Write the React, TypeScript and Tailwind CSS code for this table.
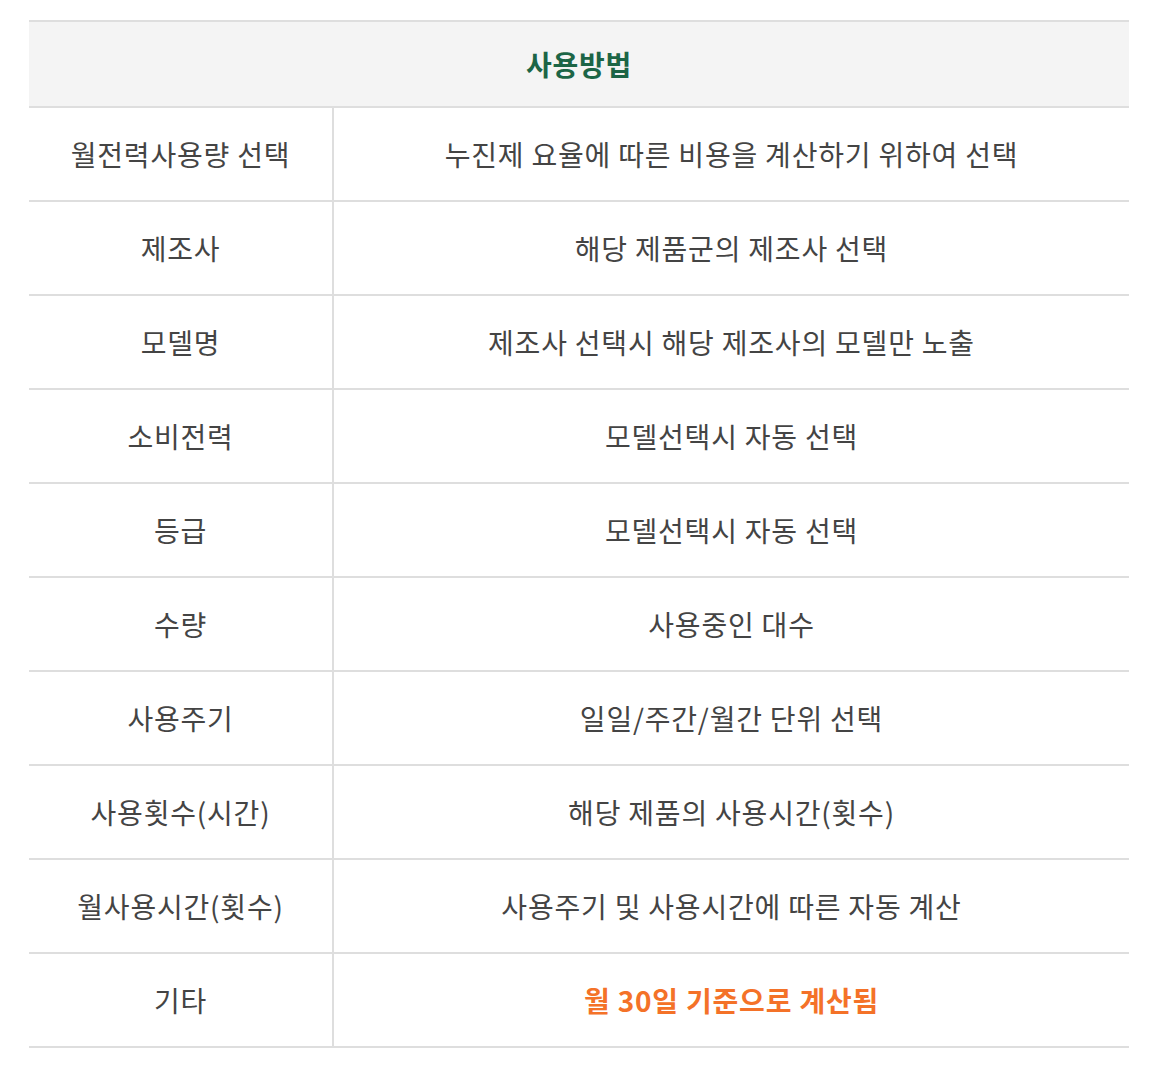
const ROWS = [
  { label: "월전력사용량 선택", desc: "누진제 요율에 따른 비용을 계산하기 위하여 선택" },
  { label: "제조사", desc: "해당 제품군의 제조사 선택" },
  { label: "모델명", desc: "제조사 선택시 해당 제조사의 모델만 노출" },
  { label: "소비전력", desc: "모델선택시 자동 선택" },
  { label: "등급", desc: "모델선택시 자동 선택" },
  { label: "수량", desc: "사용중인 대수" },
  { label: "사용주기", desc: "일일/주간/월간 단위 선택" },
  { label: "사용횟수(시간)", desc: "해당 제품의 사용시간(횟수)" },
  { label: "월사용시간(횟수)", desc: "사용주기 및 사용시간에 따른 자동 계산" },
];

export default function App() {
  return (
    <div
      className="bg-white pt-[20px] px-[29px] min-h-[1066px]"
      style={{ fontFamily: '"Noto Sans CJK KR", "Noto Sans", sans-serif' }}
    >
      <div className="w-[1100px] border-t-2 border-[#dedede]">
        {/* Header */}
        <div className="h-[86px] bg-[#f4f4f4] border-b-2 border-[#dedede] flex items-center justify-center">
          <span className="text-[28px] font-bold text-[#1c6546] tracking-[0.8px]">사용방법</span>
        </div>

        {ROWS.map((row) => (
          <div key={row.label} className="flex h-[94px] border-b-2 border-[#dedede]">
            <div className="w-[303px] flex items-center justify-center text-[28px] text-[#444] tracking-[0.8px]">
              {row.label}
            </div>
            <div className="flex-1 border-l-2 border-[#dedede] flex items-center justify-center text-[28px] text-[#444] tracking-[0.8px]">
              {row.desc}
            </div>
          </div>
        ))}

        <div className="flex h-[94px] border-b-2 border-[#dedede]">
          <div className="w-[303px] flex items-center justify-center text-[28px] text-[#444] tracking-[0.8px]">
            기타
          </div>
          <div className="flex-1 border-l-2 border-[#dedede] flex items-center justify-center text-[28px] font-bold text-[#f47228] tracking-[0.8px]">
            월 30일 기준으로 계산됨
          </div>
        </div>
      </div>
    </div>
  );
}
